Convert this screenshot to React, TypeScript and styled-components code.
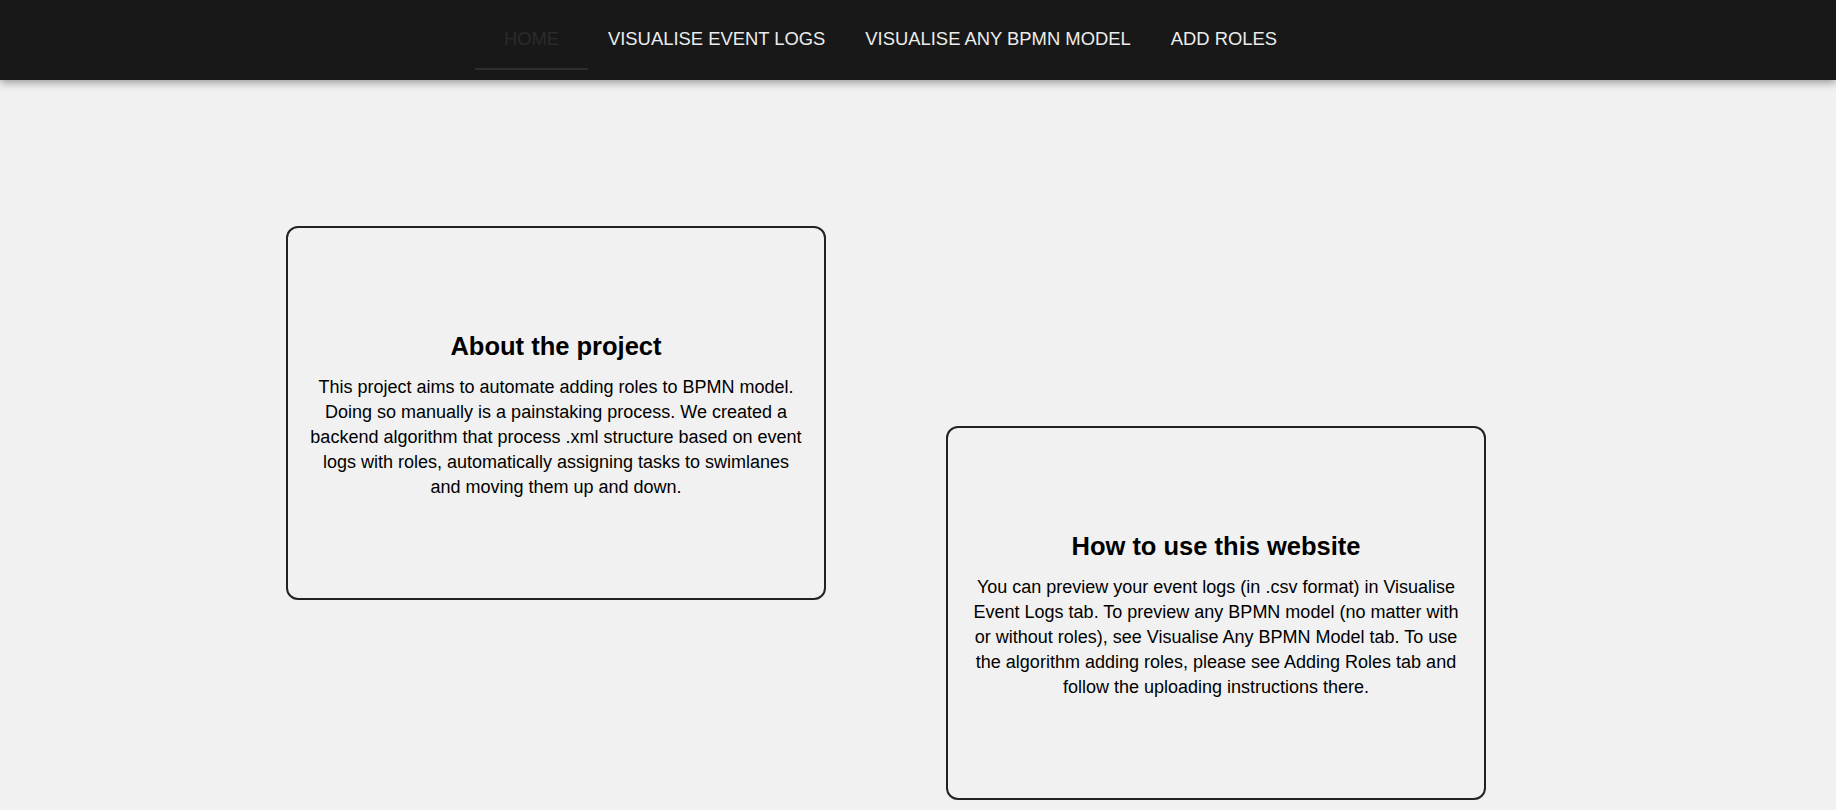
import React from "react";
import styled, { createGlobalStyle } from "styled-components";

const GlobalStyle = createGlobalStyle`
  html, body {
    margin: 0;
    padding: 0;
    background: #f1f1f1;
    font-family: "Liberation Sans", Arial, sans-serif;
    color: #000;
  }
  * { box-sizing: border-box; }
`;

const Header = styled.header`
  height: 80px;
  background: #181818;
  box-shadow: 0 3px 8px rgba(0, 0, 0, 0.35);
  display: flex;
  justify-content: center;
  align-items: flex-end;
  padding-right: 64px;
  position: relative;
  z-index: 1;
`;

const Tabs = styled.nav`
  display: flex;
  align-items: stretch;
  height: 60px;
  margin-bottom: 10px;
`;

const Tab = styled.a<{ $active?: boolean }>`
  position: relative;
  display: flex;
  align-items: center;
  justify-content: center;
  min-width: 113px;
  padding: 0 20px 2px;
  font-size: 18.4px;
  text-transform: uppercase;
  text-decoration: none;
  color: ${(p) => (p.$active ? "#2b2b2b" : "#ececec")};
  cursor: pointer;
  &::after {
    content: "";
    position: absolute;
    left: 0;
    right: 0;
    bottom: 0;
    height: 2px;
    background: ${(p) => (p.$active ? "#2e2e2e" : "transparent")};
  }
`;

const Main = styled.main`
  display: flex;
  justify-content: center;
  gap: 120px;
  padding: 146px 64px 10px 0;
`;

const Card = styled.section<{ $shift?: number }>`
  width: 540px;
  height: 374px;
  margin-top: ${(p) => p.$shift ?? 0}px;
  border: 2px solid #222;
  border-radius: 12px;
  padding: 5px 20px 0;
  display: flex;
  flex-direction: column;
  justify-content: center;
  align-items: center;
  text-align: center;
`;

const Title = styled.h2`
  margin: 0 0 14px;
  font-size: 25.5px;
  font-weight: 700;
`;

const Body = styled.p`
  margin: 0;
  font-size: 18px;
  line-height: 25px;
`;

export default function App() {
  return (
    <>
      <GlobalStyle />
      <Header>
        <Tabs>
          <Tab $active>Home</Tab>
          <Tab>Visualise Event Logs</Tab>
          <Tab>Visualise Any BPMN Model</Tab>
          <Tab>Add Roles</Tab>
        </Tabs>
      </Header>
      <Main>
        <Card>
          <Title>About the project</Title>
          <Body>
            This project aims to automate adding roles to BPMN model. Doing so
            manually is a painstaking process. We created a backend algorithm
            that process .xml structure based on event logs with roles,
            automatically assigning tasks to swimlanes and moving them up and
            down.
          </Body>
        </Card>
        <Card $shift={200}>
          <Title>How to use this website</Title>
          <Body>
            You can preview your event logs (in .csv format) in Visualise Event
            Logs tab. To preview any BPMN model (no matter with or without
            roles), see Visualise Any BPMN Model tab. To use the algorithm
            adding roles, please see Adding Roles tab and follow the uploading
            instructions there.
          </Body>
        </Card>
      </Main>
    </>
  );
}
